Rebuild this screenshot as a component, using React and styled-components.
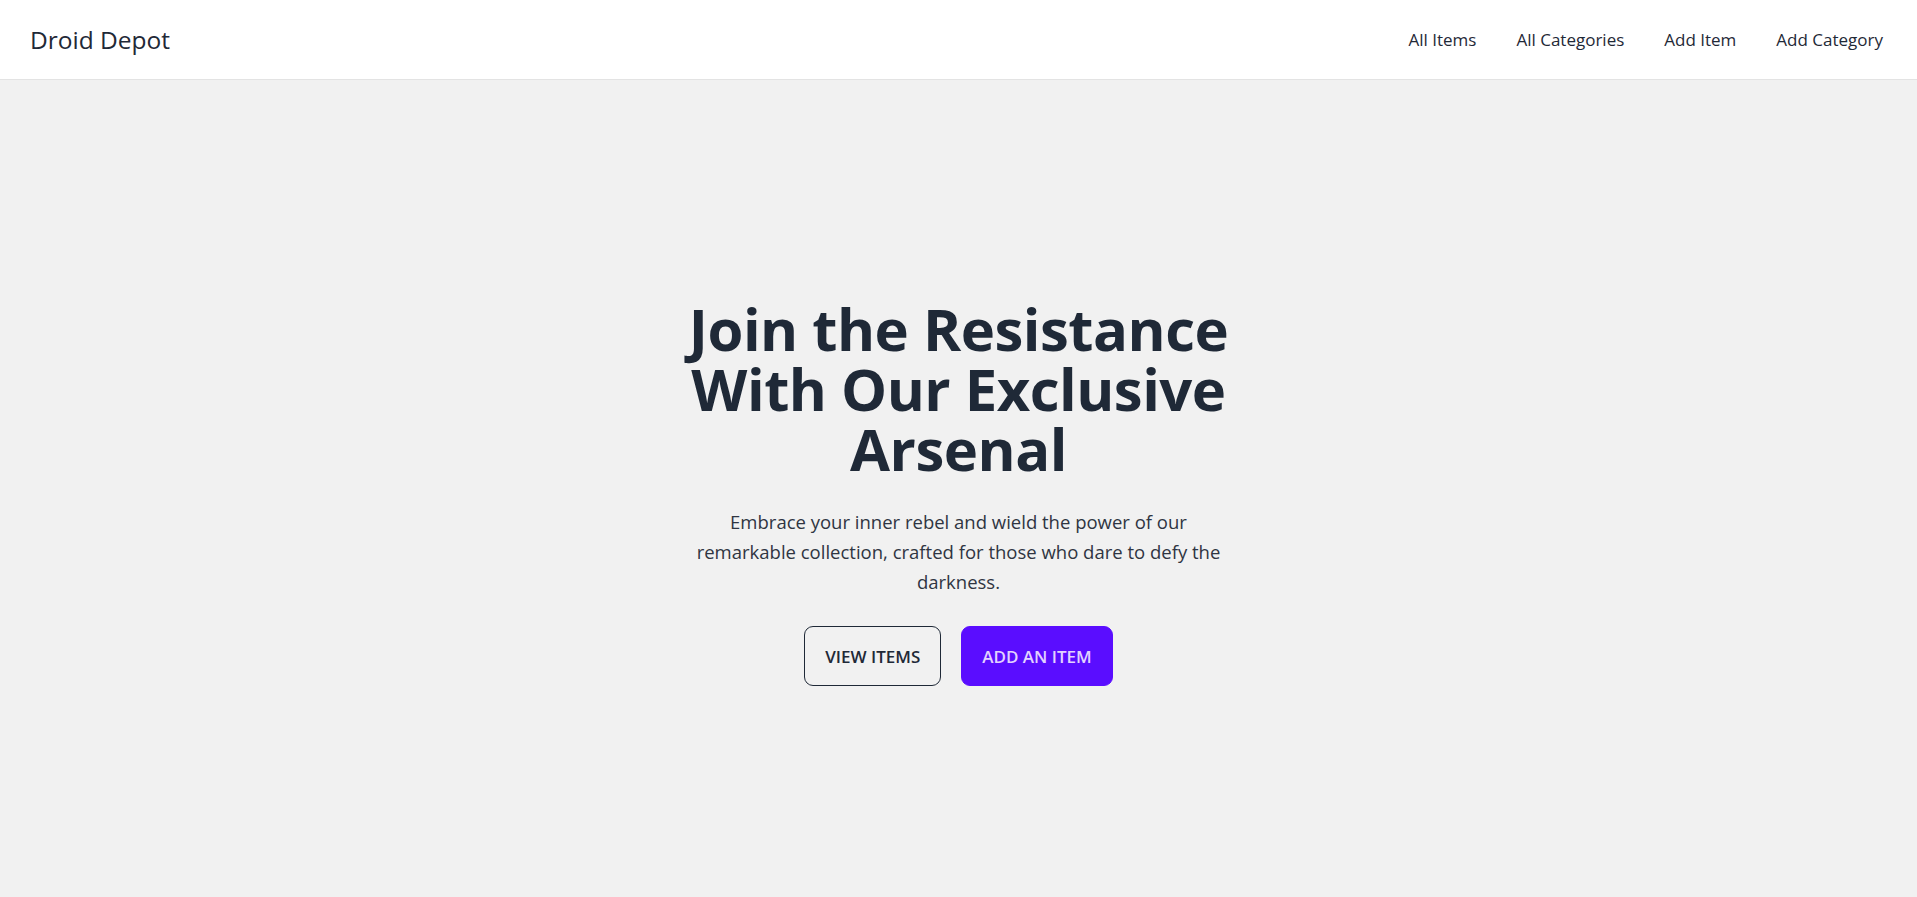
import React from 'react';
import styled, { createGlobalStyle } from 'styled-components';

const GlobalStyle = createGlobalStyle`
    * {
        box-sizing: border-box;
    }

    body {
        margin: 0;
        font-family: "Open Sans", "Noto Sans", sans-serif;
        background-color: #f1f1f1;
        color: #1f2937;
    }
`;

const Page = styled.div`
    min-height: 100vh;
    display: flex;
    flex-direction: column;
`;

const NavBar = styled.header`
    height: 80px;
    background-color: #ffffff;
    border-bottom: 1px solid #e3e3e3;
    padding: 0 34px 0 30px;
    display: flex;
    align-items: center;
    justify-content: space-between;
`;

const Brand = styled.a`
    font-size: 24.5px;
    font-weight: 500;
    color: #1f2937;
    text-decoration: none;
`;

const NavLinks = styled.nav`
    display: flex;
    align-items: center;
    gap: 40px;
`;

const NavLink = styled.a`
    font-size: 17px;
    color: #1f2937;
    text-decoration: none;
    cursor: pointer;
`;

const Hero = styled.main`
    flex: 1;
    padding-top: 8px;
    display: flex;
    align-items: center;
    justify-content: center;
`;

const HeroContent = styled.section`
    width: 548px;
    display: flex;
    flex-direction: column;
    align-items: center;
    text-align: center;
`;

const Heading = styled.h1`
    margin: 0;
    font-size: 58px;
    line-height: 60px;
    font-weight: 700;
    color: #1f2937;
    letter-spacing: -0.5px;
`;

const Lead = styled.p`
    margin: 28px 0 0;
    font-size: 18.5px;
    line-height: 30px;
    color: #2f3542;
`;

const Actions = styled.div`
    margin-top: 29px;
    display: flex;
    gap: 20px;
`;

const Button = styled.button`
    height: 60px;
    padding: 0 20px;
    border-radius: 9px;
    font-family: inherit;
    font-size: 17px;
    font-weight: 600;
    text-transform: uppercase;
    cursor: pointer;
    border: 1px solid ${({ $primary }) => ($primary ? '#5a0dff' : '#1f2937')};
    background-color: ${({ $primary }) => ($primary ? '#5a0dff' : 'transparent')};
    color: ${({ $primary }) => ($primary ? '#e2d2ff' : '#1f2937')};
`;

function App() {
    return (
        <Page>
            <GlobalStyle />
            <NavBar>
                <Brand href="#">Droid Depot</Brand>
                <NavLinks>
                    <NavLink>All Items</NavLink>
                    <NavLink>All Categories</NavLink>
                    <NavLink>Add Item</NavLink>
                    <NavLink>Add Category</NavLink>
                </NavLinks>
            </NavBar>
            <Hero>
                <HeroContent>
                    <Heading>Join the Resistance With Our Exclusive Arsenal</Heading>
                    <Lead>
                        Embrace your inner rebel and wield the power of our remarkable
                        collection, crafted for those who dare to defy the darkness.
                    </Lead>
                    <Actions>
                        <Button>View Items</Button>
                        <Button $primary>Add an Item</Button>
                    </Actions>
                </HeroContent>
            </Hero>
        </Page>
    );
}

export default App;
